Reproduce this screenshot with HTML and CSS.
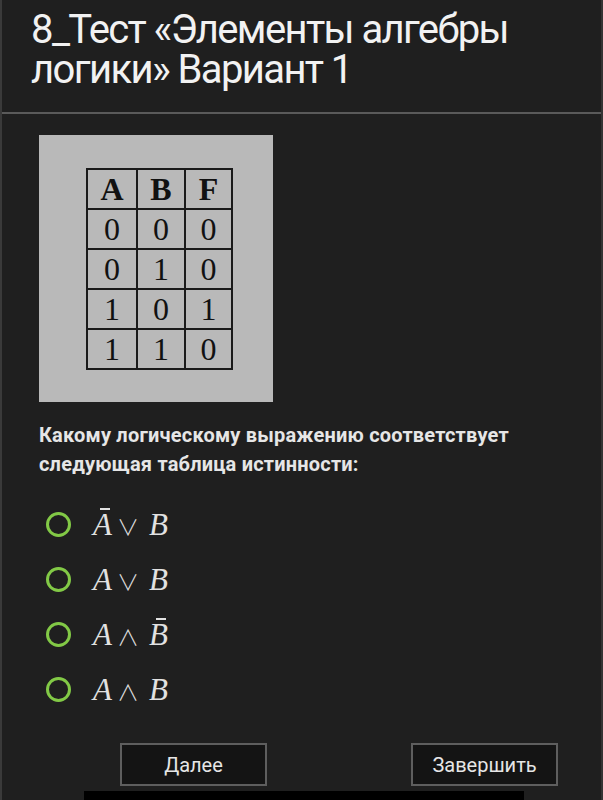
FILE: index.html
```html
<!DOCTYPE html>
<html lang="ru">
<head>
<meta charset="utf-8">
<title>Тест</title>
<link rel="stylesheet" href="styles.css">
</head>
<body>
<div class="page">
  <header class="header">
    <h1 class="title">8_Тест «Элементы алгебры логики» Вариант 1</h1>
  </header>
  <main class="content">
    <div class="figure">
      <table class="truth">
        <thead>
          <tr><th>A</th><th>B</th><th>F</th></tr>
        </thead>
        <tbody>
          <tr><td>0</td><td>0</td><td>0</td></tr>
          <tr><td>0</td><td>1</td><td>0</td></tr>
          <tr><td>1</td><td>0</td><td>1</td></tr>
          <tr><td>1</td><td>1</td><td>0</td></tr>
        </tbody>
      </table>
    </div>
    <p class="question">Какому логическому выражению соответствует следующая таблица истинности:</p>
    <ul class="options">
      <li class="option"><span class="radio"></span><span class="math"><span class="v bar">A</span><span class="op">∨</span><span class="v">B</span></span></li>
      <li class="option"><span class="radio"></span><span class="math"><span class="v">A</span><span class="op">∨</span><span class="v">B</span></span></li>
      <li class="option"><span class="radio"></span><span class="math"><span class="v">A</span><span class="op">∧</span><span class="v bar">B</span></span></li>
      <li class="option"><span class="radio"></span><span class="math"><span class="v">A</span><span class="op">∧</span><span class="v">B</span></span></li>
    </ul>
    <div class="buttons">
      <button class="btn">Далее</button>
      <button class="btn">Завершить</button>
    </div>
    <div class="bottom-bar"></div>
  </main>
</div>
</body>
</html>
```
FILE: styles.css
```css
* { box-sizing: border-box; }
html, body { margin: 0; padding: 0; background: #1e1e1e; }
body { font-family: Roboto, "Noto Sans", sans-serif; color: #ececec; }
.page {
  width: 603px;
  height: 800px;
  overflow: hidden;
  border-left: 2px solid #3a3a3a;
  border-right: 2px solid #343434;
  background: #1f1f1f;
}
.header {
  height: 114px;
  border-bottom: 2px solid #5a5a5a;
  padding: 10px 0 0 29px;
}
.title {
  margin: 0;
  font-size: 40px;
  line-height: 40px;
  font-weight: 400;
  color: #f2f2f2;
  letter-spacing: -1.6px;
}
.content { padding-left: 37px; }
.figure {
  margin-top: 21px;
  width: 234px;
  height: 267px;
  background: #b9b9b9;
  padding: 33px 0 0 47px;
}
.truth {
  border-collapse: collapse;
  font-family: "Liberation Serif", serif;
  color: #111;
  font-size: 32px;
}
.truth th, .truth td {
  border: 2px solid #1a1a1a;
  height: 40px;
  padding: 0;
  text-align: center;
  line-height: 36px;
}
.truth th { font-weight: 700; }
.truth th:nth-child(1), .truth td:nth-child(1) { width: 50px; }
.truth th:nth-child(2), .truth td:nth-child(2) { width: 48px; }
.truth th:nth-child(3), .truth td:nth-child(3) { width: 47px; }
.question {
  margin: 19px 0 0 0;
  font-size: 20px;
  line-height: 29px;
  font-weight: 700;
  color: #e6e6e6;
  width: 530px;
  letter-spacing: 0.2px;
}
.options {
  list-style: none;
  margin: 18px 0 0 0;
  padding: 0;
}
.option {
  display: flex;
  align-items: center;
  height: 55px;
}
.radio {
  width: 25px;
  height: 25px;
  border: 3px solid #82c946;
  border-radius: 50%;
  margin-left: 7px;
  margin-right: 22px;
  flex-shrink: 0;
}
.math {
  font-family: "Liberation Serif", "DejaVu Serif", serif;
  font-size: 31px;
  color: #e2e2e2;
  display: flex;
  align-items: baseline;
}
.v { font-style: italic; position: relative; }
.bar::before {
  content: "";
  position: absolute;
  top: 1px;
  left: 7px;
  width: 10px;
  height: 2px;
  background: #e2e2e2;
}
.op {
  font-family: "Noto Sans CJK JP", "DejaVu Sans", sans-serif;
  font-size: 22px;
  font-weight: 300;
  margin: 0 10px 0 5px;
}
.buttons {
  display: flex;
  justify-content: space-between;
  margin-top: 26px;
  padding: 0 43px 0 81px;
}
.btn {
  width: 147px;
  height: 43px;
  background: #141414;
  border: 2px solid #5e5e5e;
  color: #e6e6e6;
  font-family: Roboto, sans-serif;
  font-size: 20px;
  padding: 0;
}
.bottom-bar {
  margin: 5px 0 0 45px;
  width: 440px;
  height: 10px;
  background: #000;
}
```
